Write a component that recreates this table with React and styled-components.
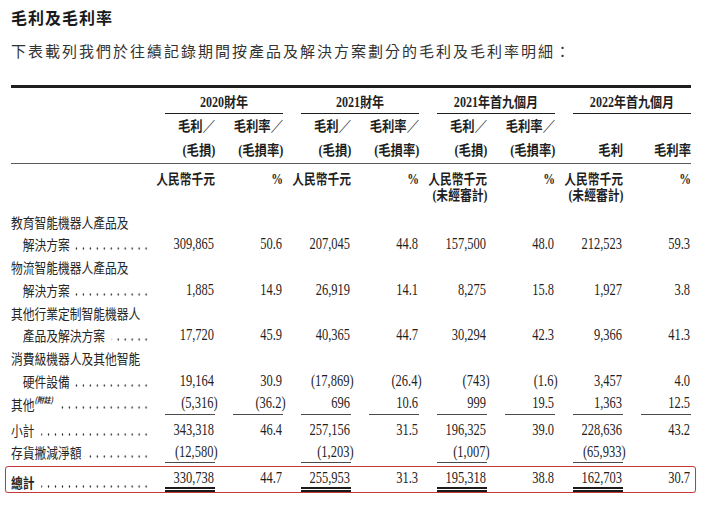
import styled, { createGlobalStyle } from "styled-components";

const GlobalStyle = createGlobalStyle`
  body {
    margin: 0;
    background: #ffffff;
    color: #1f1f1f;
    font-family: "Liberation Serif", "Noto Sans CJK TC", serif;
  }
`;

const COLS = "136px repeat(8, 50px)";

const groups = ["2020財年", "2021財年", "2021年首九個月", "2022年首九個月"];

const subHeads = [
    [["毛利／", "(毛損)"], ["毛利率／", "(毛損率)"]],
    [["毛利／", "(毛損)"], ["毛利率／", "(毛損率)"]],
    [["毛利／", "(毛損)"], ["毛利率／", "(毛損率)"]],
    [["毛利"], ["毛利率"]],
];

const units = [
    [["人民幣千元"], ["%"]],
    [["人民幣千元"], ["%"]],
    [["人民幣千元", "(未經審計)"], ["%"]],
    [["人民幣千元", "(未經審計)"], ["%"]],
];

const rows = [
    { label: ["教育智能機器人產品及", "解決方案"], values: ["309,865", "50.6", "207,045", "44.8", "157,500", "48.0", "212,523", "59.3"] },
    { label: ["物流智能機器人產品及", "解決方案"], values: ["1,885", "14.9", "26,919", "14.1", "8,275", "15.8", "1,927", "3.8"] },
    { label: ["其他行業定制智能機器人", "產品及解決方案"], values: ["17,720", "45.9", "40,365", "44.7", "30,294", "42.3", "9,366", "41.3"], gap: 8 },
    { label: ["消費級機器人及其他智能", "硬件設備"], values: ["19,164", "30.9", "(17,869)", "(26.4)", "(743)", "(1.6)", "3,457", "4.0"] },
];

function Value({ v }) {
    if (v.startsWith("(")) {
        return <>{v.slice(0, -1)}<Hang>)</Hang></>;
    }
    return v;
}

function Label({ lines, lh, note, bold, gap }) {
    return (
        <LabelCell>
            <LabelInner $lh={lh} $bold={bold}>
                {lines.map((text, i) => {
                    const last = i === lines.length - 1;
                    return (
                        <LabelLine key={i} $indent={i > 0}>
                            <span>{text}</span>
                            {last && note && <Note>(附註)</Note>}
                            {last && <Leader $lh={lh} $gap={gap} />}
                        </LabelLine>
                    );
                })}
            </LabelInner>
        </LabelCell>
    );
}

function NumRow({ values, lh, rule, ruleAll }) {
    return values.map((v, i) => {
        const isAmount = i % 2 === 0;
        const r = ruleAll ? rule : (isAmount ? rule : null);
        return (
            <Num key={i} $lh={lh} $rule={r}>
                <Squeeze><Value v={v} /></Squeeze>
            </Num>
        );
    });
}

export default function App() {
    return (
        <>
            <GlobalStyle />
            <Page>
                <Title>毛利及毛利率</Title>
                <Intro>下表載列我們於往績記錄期間按產品及解決方案劃分的毛利及毛利率明細：</Intro>
                <TopRule />

                <Row $h={26}>
                    <div />
                    {groups.map(g => (
                        <GroupTitle key={g}><Squeeze $o="center" $x={0.86}>{g}</Squeeze></GroupTitle>
                    ))}
                </Row>

                <Row $h={49} $rule>
                    <div />
                    {subHeads.flat().map((lines, i) => (
                        <HeadCell key={i}>
                            {lines.map(t => <Squeeze key={t} $x={0.88}>{t}</Squeeze>)}
                        </HeadCell>
                    ))}
                </Row>

                <Row $h={32} $pt={7.5} $align="start">
                    <div />
                    {units.flat().map((lines, i) => (
                        <UnitCell key={i}>
                            {lines.map(t => <Squeeze key={t} $x={0.84}>{t}</Squeeze>)}
                        </UnitCell>
                    ))}
                </Row>

                <Body>
                    {rows.map(row => (
                        <Row key={row.label[0]} $h={45.5}>
                            <Label lines={row.label} lh={22.75} gap={row.gap} />
                            <NumRow values={row.values} lh={22.75} />
                        </Row>
                    ))}

                    <Row $h={22.4}>
                        <Label lines={["其他"]} lh={22.4} note gap={6} />
                        <NumRow values={["(5,316)", "(36.2)", "696", "10.6", "999", "19.5", "1,363", "12.5"]} lh={20.9} rule="single" ruleAll />
                    </Row>

                    <Row $h={27}>
                        <Label lines={["小計"]} lh={22.75} gap={8} />
                        <NumRow values={["343,318", "46.4", "257,156", "31.5", "196,325", "39.0", "228,636", "43.2"]} lh={22.75} />
                    </Row>

                    <Row $h={21.5}>
                        <Label lines={["存貨撇減淨額"]} lh={21.5} />
                        <NumRow values={["(12,580)", "", "(1,203)", "", "(1,007)", "", "(65,933)", ""]} lh={20} rule="single" />
                    </Row>

                    <TotalBox>
                        <Row $h={24} $align="start">
                            <Label lines={["總計"]} lh={19} bold gap={8} />
                            <NumRow values={["330,738", "44.7", "255,953", "31.3", "195,318", "38.8", "162,703", "30.7"]} lh={19} rule="double" />
                        </Row>
                    </TotalBox>
                </Body>
            </Page>
        </>
    );
}

const Page = styled.div`
    width: 680px;
    padding: 7px 0 0 11px;
`
const Title = styled.h2`
    margin: 0;
    font-family: "Noto Sans CJK TC", sans-serif;
    font-size: 16px;
    font-weight: 700;
    line-height: 20px;
    letter-spacing: 1px;
    color: #1a1a1a;
`
const Intro = styled.p`
    margin: 14px 0 0;
    font-family: "Noto Sans CJK TC", sans-serif;
    font-size: 15px;
    line-height: 20px;
    letter-spacing: 2px;
    color: #333333;
    white-space: nowrap;
`
const TopRule = styled.div`
    margin-top: 24px;
    height: 3px;
    background: #1f1f1f;
`
const Row = styled.div`
    display: grid;
    grid-template-columns: ${COLS};
    column-gap: 18px;
    align-items: ${(props) => props.$align || "end"};
    height: ${(props) => props.$h}px;
    padding-top: ${(props) => props.$pt || 0}px;
    border-bottom: ${(props) => props.$rule ? "1.5px solid #5a5a5a" : "none"};
`
const Body = styled.div`
    margin-top: 7px;
`
const Squeeze = styled.span`
    display: inline-block;
    white-space: nowrap;
    transform: scaleX(${(props) => props.$x || 0.78});
    transform-origin: ${(props) => props.$o || "right"} center;
`
const GroupTitle = styled.div`
    grid-column: span 2;
    text-align: center;
    font-weight: 700;
    font-size: 14px;
    line-height: 18px;
    padding-bottom: 1px;
    border-bottom: 1px solid #1f1f1f;
`
const HeadCell = styled.div`
    display: flex;
    flex-direction: column;
    align-items: flex-end;
    justify-content: flex-end;
    font-weight: 700;
    font-size: 14px;
    line-height: 24px;
`
const UnitCell = styled.div`
    display: flex;
    flex-direction: column;
    align-items: flex-end;
    font-weight: 700;
    font-size: 14px;
    line-height: 16px;
`
const LabelCell = styled.div`
    min-width: 0;
    align-self: stretch;
    display: flex;
    flex-direction: column;
    justify-content: flex-end;
`
const LabelInner = styled.div`
    width: 162px;
    transform: scaleX(0.84);
    transform-origin: left center;
    font-family: "Noto Sans CJK TC", sans-serif;
    font-size: 14px;
    font-weight: ${(props) => props.$bold ? 700 : 400};
    line-height: ${(props) => props.$lh}px;
    color: #262626;
`
const LabelLine = styled.div`
    display: flex;
    padding-left: ${(props) => props.$indent ? 14 : 0}px;
    white-space: nowrap;
`
const Note = styled.span`
    font-size: 8px;
    font-style: italic;
    font-weight: 700;
    line-height: 8px;
    margin-top: 3px;
`
const Leader = styled.span`
    flex: 1;
    margin-left: ${(props) => props.$gap || 3}px;
    margin-right: -3px;
    background-image: radial-gradient(circle, #2a2a2a 0.85px, transparent 1.25px);
    background-size: 8.3px 3px;
    background-repeat: repeat-x;
    background-position: right 0 bottom ${(props) => (props.$lh - 14) / 2 + 1.6}px;
`
const Num = styled.div`
    display: flex;
    justify-content: flex-end;
    padding-right: 1px;
    font-size: 16px;
    line-height: ${(props) => props.$lh}px;
    min-height: ${(props) => props.$lh}px;
    color: #1f1f1f;
    border-bottom: ${(props) => props.$rule === "single" ? "1.5px solid #4a4a4a"
        : props.$rule === "double" ? "5px double #1a1a1a" : "none"};
`
const Hang = styled.span`
    margin-right: -5px;
`
const TotalBox = styled.div`
    margin: 2.5px -5px 0 -6px;
    padding: 1.5px 3.5px 0 4.5px;
    border: 1.5px solid #c43a3a;
    border-radius: 3px;
    box-shadow: 0 1px 1px rgba(0, 0, 0, 0.2);
`
